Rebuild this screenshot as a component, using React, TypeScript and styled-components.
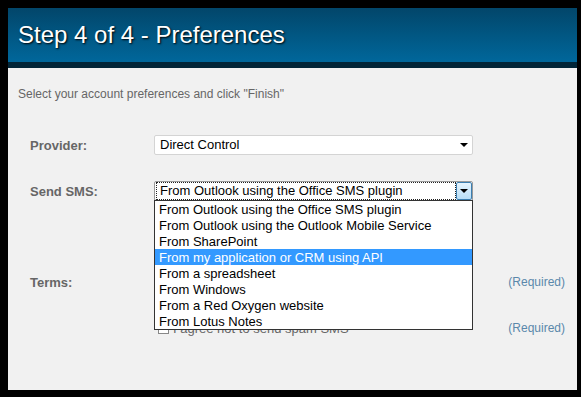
import { createGlobalStyle, styled } from "styled-components";

const GlobalStyle = createGlobalStyle`
  html, body {
    margin: 0;
    padding: 0;
    background: #ffffff;
  }
  body {
    font-family: "Liberation Sans", Arial, sans-serif;
  }
`;

const Frame = styled.div`
  width: 581px;
  height: 397px;
  box-sizing: border-box;
  background: #000;
  padding: 8px 4px 7px 8px;
`;

const Panel = styled.div`
  height: 100%;
  display: flex;
  flex-direction: column;
  background: #f1f1f1;
`;

const Header = styled.div`
  height: 54px;
  display: flex;
  align-items: center;
  padding-left: 10px;
  background: linear-gradient(to bottom, #02466a, #00679b);
  border-bottom: 6px solid #022537;
`;

const Title = styled.h1`
  margin: 0;
  font-size: 24px;
  font-weight: normal;
  color: #fff;
  text-shadow: 1px 1px 2px #000;
`;

const Body = styled.div`
  flex: 1;
  padding: 19px 10px 0 10px;
`;

const Intro = styled.p`
  margin: 0 0 34px 0;
  font-size: 12px;
  line-height: 14px;
  color: #666;
`;

const Row = styled.div<{ $top?: number; $height?: number }>`
  display: grid;
  grid-template-columns: 124px 319px 1fr;
  align-items: center;
  padding-left: 12px;
  margin-top: ${(p) => p.$top ?? 0}px;
  height: ${(p) => p.$height ?? 20}px;
`;

const Label = styled.div`
  font-size: 13px;
  font-weight: bold;
  color: #666;
`;

const Required = styled.div`
  font-size: 12px;
  color: #5a88ab;
  text-align: right;
  padding-right: 2px;
`;

const Select = styled.div<{ $focused?: boolean }>`
  position: relative;
  height: 20px;
  box-sizing: border-box;
  display: flex;
  align-items: center;
  background: #fff;
  border: 1px solid ${(p) => (p.$focused ? "#9a9a9a" : "#d4d4d4")};
  border-radius: 2px;
  font-size: 13px;
  color: #000;
`;

const Value = styled.div<{ $focused?: boolean }>`
  flex: 1;
  height: 16px;
  line-height: 16px;
  margin-left: 1px;
  padding-left: 3px;
  border: 1px dotted ${(p) => (p.$focused ? "#222" : "transparent")};
  white-space: nowrap;
`;

const ArrowBox = styled.div<{ $focused?: boolean }>`
  width: 16px;
  height: 18px;
  box-sizing: border-box;
  display: flex;
  align-items: center;
  justify-content: center;
  ${(p) =>
    p.$focused &&
    `
    background: linear-gradient(to bottom, #e6f4fd, #b8def7);
    border: 1px solid #3c7fb1;
    border-radius: 2px;
  `}
`;

const Arrow = styled.span`
  width: 0;
  height: 0;
  border-left: 4px solid transparent;
  border-right: 4px solid transparent;
  border-top: 4px solid #000;
`;

const List = styled.ul`
  position: absolute;
  top: 100%;
  left: -1px;
  width: 319px;
  box-sizing: border-box;
  margin: 0;
  padding: 0;
  list-style: none;
  background: #fff;
  border: 1px solid #333;
  z-index: 2;
`;

const Item = styled.li<{ $active?: boolean }>`
  height: 16px;
  line-height: 17px;
  padding-left: 4px;
  font-size: 13px;
  white-space: nowrap;
  background: ${(p) => (p.$active ? "#3399ff" : "#fff")};
  color: ${(p) => (p.$active ? "#fff" : "#000")};
`;

const Check = styled.label`
  display: flex;
  align-items: center;
  gap: 4px;
  padding-left: 4px;
  font-size: 13px;
  color: #666;
`;

const Box = styled.span`
  width: 9px;
  height: 9px;
  border: 1px solid #888;
  background: #fff;
`;

const options = [
  "From Outlook using the Office SMS plugin",
  "From Outlook using the Outlook Mobile Service",
  "From SharePoint",
  "From my application or CRM using API",
  "From a spreadsheet",
  "From Windows",
  "From a Red Oxygen website",
  "From Lotus Notes",
];

function App() {
  return (
    <>
      <GlobalStyle />
      <Frame>
        <Panel>
          <Header>
            <Title>Step 4 of 4 - Preferences</Title>
          </Header>
          <Body>
            <Intro>Select your account preferences and click "Finish"</Intro>
            <Row>
              <Label>Provider:</Label>
              <Select>
                <Value>Direct Control</Value>
                <ArrowBox>
                  <Arrow />
                </ArrowBox>
              </Select>
            </Row>
            <Row $top={26}>
              <Label>Send SMS:</Label>
              <Select $focused>
                <Value $focused>{options[0]}</Value>
                <ArrowBox $focused>
                  <Arrow />
                </ArrowBox>
                <List>
                  {options.map((o, i) => (
                    <Item key={o} $active={i === 3}>
                      {o}
                    </Item>
                  ))}
                </List>
              </Select>
            </Row>
            <Row $top={61} $height={40}>
              <Label>Terms:</Label>
              <div />
              <Required>(Required)</Required>
            </Row>
            <Row $top={18} $height={16}>
              <div />
              <Check>
                <Box />
                I agree not to send spam SMS
              </Check>
              <Required>(Required)</Required>
            </Row>
          </Body>
        </Panel>
      </Frame>
    </>
  );
}

export default App;
